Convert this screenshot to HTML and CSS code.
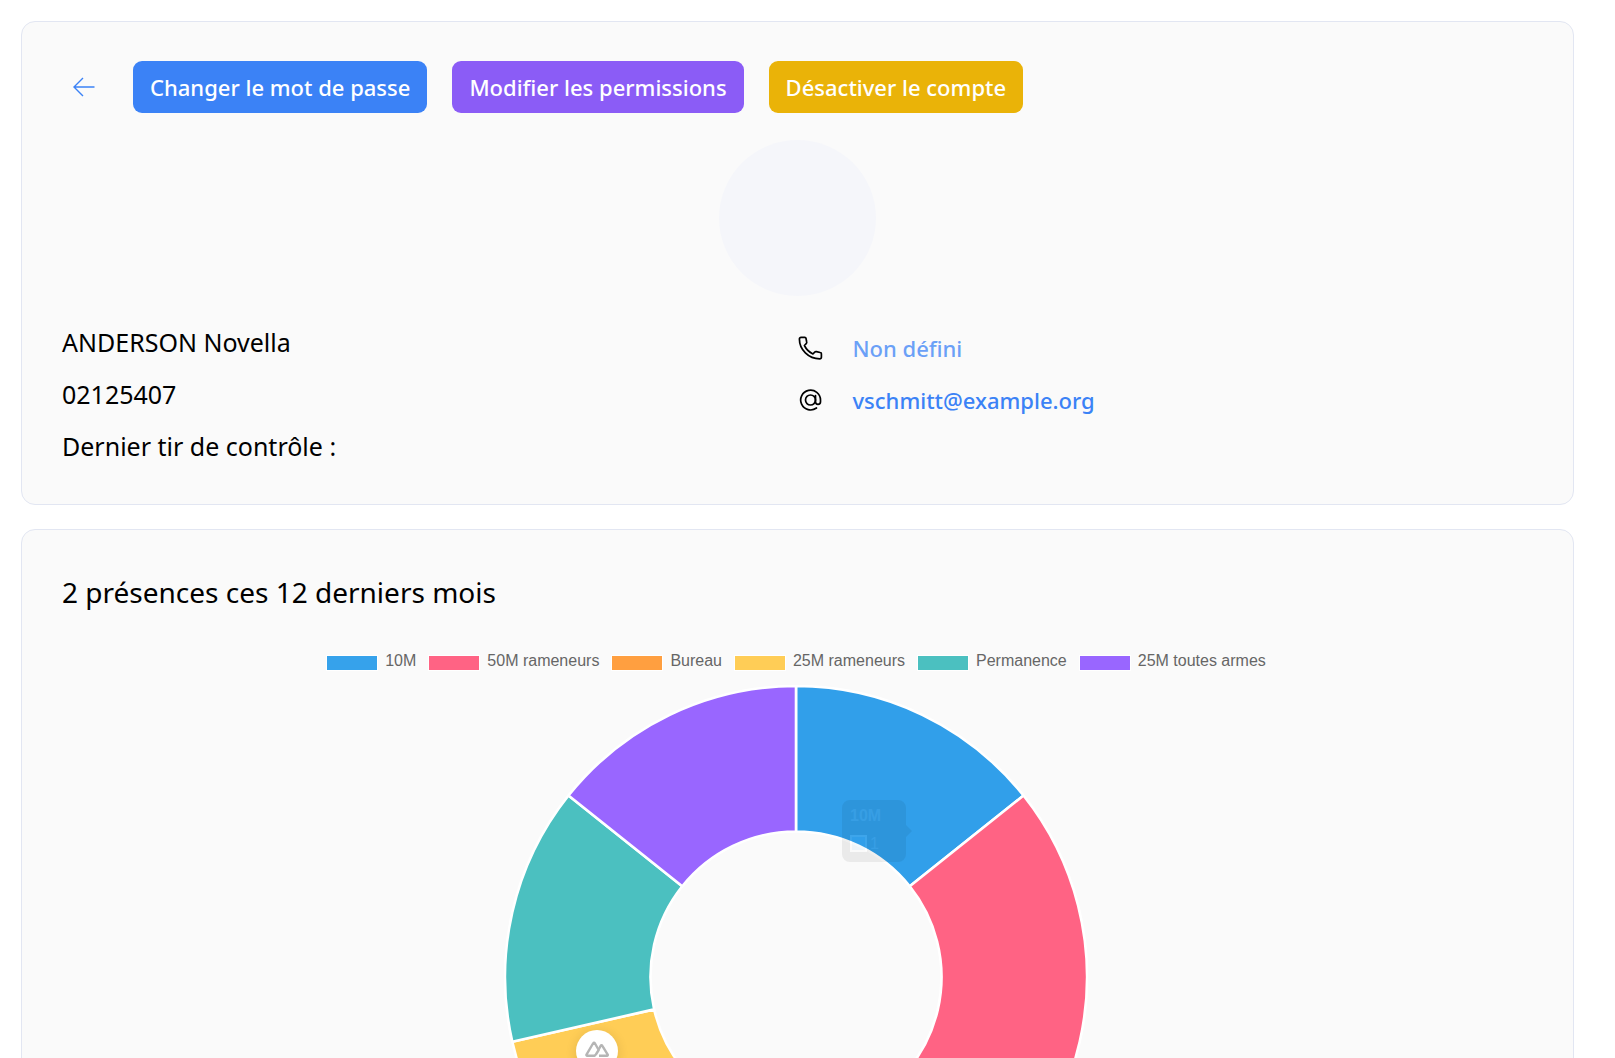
FILE: index.html
```html
<!DOCTYPE html>
<html lang="fr">
<head>
<meta charset="utf-8">
<meta name="viewport" content="width=device-width, initial-scale=1">
<title>ANDERSON Novella</title>
<link rel="stylesheet" href="styles.css">
</head>
<body>
<main class="page">
  <section class="card profile">
    <div class="actions">
      <a class="back" href="#" aria-label="Retour">
        <svg class="icon" viewBox="0 0 26 26" fill="none" stroke="currentColor" stroke-width="1.4"><path d="M23.500 13H3M12 4L3 13l9 9"/></svg>
      </a>
      <button class="btn btn-blue" type="button">Changer le mot de passe</button>
      <button class="btn btn-violet" type="button">Modifier les permissions</button>
      <button class="btn btn-yellow" type="button">Désactiver le compte</button>
    </div>
    <div class="avatar"></div>
    <div class="details">
      <div class="identity">
        <p>ANDERSON Novella</p>
        <p>02125407</p>
        <p>Dernier tir de contrôle :</p>
      </div>
      <div class="contact">
        <div class="contact-row">
          <svg class="icon" viewBox="0 0 26 26" fill="none" stroke="currentColor" stroke-width="1.700" stroke-linejoin="round"><path d="M3 2.300h3.700a1.300 1.300 0 0 1 1.300 1l.7 3.700a1.800 1.800 0 0 1-.5 1.700L6.400 10.500a19 19 0 0 0 8.500 8.500l1.800-1.800a1.800 1.800 0 0 1 1.700-.5l3.800.8a1.300 1.300 0 0 1 1.200 1.300v3.400a1.600 1.600 0 0 1-1.600 1.600C10.500 23.800 1.400 14.500 1.400 3.900a1.600 1.600 0 0 1 1.600-1.600z"/></svg>
          <a class="link muted" href="#">Non défini</a>
        </div>
        <div class="contact-row">
          <svg class="icon" viewBox="0 0 26 26" fill="none" stroke="currentColor" stroke-width="1.700" stroke-linecap="round"><circle cx="12.500" cy="13" r="5"/><path d="M17.500 8.500V14.800a2.500 2.500 0 0 0 5 0V13A9.900 9.900 0 1 0 18.500 21"/></svg>
          <a class="link" href="mailto:vschmitt@example.org">vschmitt@example.org</a>
        </div>
      </div>
    </div>
  </section>

  <section class="card stats">
    <h2 class="title">2 présences ces 12 derniers mois</h2>
    <div class="graph">
      <ul class="legend">
        <li><span class="swatch c-blue"></span>10M</li>
        <li><span class="swatch c-red"></span>50M rameneurs</li>
        <li><span class="swatch c-orange"></span>Bureau</li>
        <li><span class="swatch c-yellow"></span>25M rameneurs</li>
        <li><span class="swatch c-teal"></span>Permanence</li>
        <li><span class="swatch c-purple"></span>25M toutes armes</li>
      </ul>
      <svg class="chart" viewBox="-292 -292 584 584" role="img" aria-label="Répartition des présences">
        <g stroke="#fff" stroke-width="2.600" stroke-linejoin="bevel">
          <path fill="#319fea" d="M0-291A291 291 0 0 1 227.510-181.440L113.760-90.720A145.500 145.500 0 0 0 0-145.500Z"/>
          <path fill="#ff6384" d="M227.510-181.440A291 291 0 0 1 126.260 262.180L63.130 131.090A145.500 145.500 0 0 0 113.760-90.720Z"/>
          <path fill="#ff9f40" d="M126.260 262.180A291 291 0 0 1-126.260 262.180L-63.130 131.090A145.500 145.500 0 0 0 63.130 131.090Z"/>
          <path fill="#ffcd56" d="M-126.260 262.180A291 291 0 0 1-283.700 64.750L-141.850 32.380A145.500 145.500 0 0 0-63.130 131.090Z"/>
          <path fill="#4bc0c0" d="M-283.700 64.750A291 291 0 0 1-227.510-181.440L-113.760-90.720A145.500 145.500 0 0 0-141.850 32.380Z"/>
          <path fill="#9966ff" d="M-227.510-181.440A291 291 0 0 1 0-291V-145.500A145.500 145.500 0 0 0-113.760-90.720Z"/>
        </g>
        <g opacity=".06">
          <path d="M54-177h48a8 8 0 0 1 8 8v17l6 6-6 6v17a8 8 0 0 1-8 8H54a8 8 0 0 1-8-8v-46a8 8 0 0 1 8-8z"/>
          <text class="tip-title" x="54" y="-156" fill="#999">10M</text>
          <path d="M55-141h15v15H55z" fill="#36a2eb" stroke="#fff" stroke-width="2"/>
          <text x="74" y="-128" fill="#999">1</text>
        </g>
      </svg>
    </div>
  </section>
</main>
<button class="devtools" type="button" aria-label="Nuxt DevTools">
  <svg viewBox="0 0 24 16" fill="none" stroke="#b5b5b5" stroke-width="2.400" stroke-linejoin="round"><path d="M10.500 14.800H2.200a.8.800 0 0 1-.7-1.200L8.300 2a.8.800 0 0 1 1.400 0l4 7-2.500 4c-.6 1.200-1.200 1.800-2.200 1.800"/><path d="M14 14.800h8a.8.800 0 0 0 .7-1.200L17.200 4.700a.8.800 0 0 0-1.400 0L13.700 8.500"/></svg>
</button>
</body>
</html>
```
FILE: styles.css
```css
* { box-sizing: border-box; }

body {
  margin: 0;
  background: #fff;
  color: #000;
  font-family: "Noto Sans", sans-serif;
  font-size: 25px;
}

p, h2, ul { margin: 0; padding: 0; }

.page {
  display: flex;
  flex-direction: column;
  gap: 24px;
  padding: 21px 41px 21px 21px;
}

.card {
  padding: 39px 40px 32px;
  border: 1px solid #e2e6f2;
  border-radius: 14px;
  background: #fafafa;
}

.actions {
  display: flex;
  align-items: center;
  gap: 25px;
}

.back {
  display: flex;
  padding: 0 11px 0 9px;
  color: #3b82f6;
}

.icon { width: 26px; height: 26px; flex: none; }

.btn {
  height: 52px;
  padding: 0 17px;
  border: 0;
  border-radius: 9px;
  color: #fff;
  font: 500 22px/32px "Noto Sans", sans-serif;
  cursor: pointer;
}
.btn-blue { background: #3b82f6; }
.btn-violet { background: #8b5cf6; }
.btn-yellow { background: #eab308; }

.avatar {
  width: 157px;
  height: 156px;
  margin: 27px auto 20px;
  border-radius: 50%;
  background: #f5f6fa;
}

.details {
  display: grid;
  grid-template-columns: 1fr 1fr;
  line-height: 52px;
}

.contact { padding-top: 6px; }

.contact-row {
  display: flex;
  align-items: center;
  gap: 29px;
  height: 52px;
}

.link {
  color: #3b82f6;
  font-size: 22px;
  font-weight: 500;
  text-decoration: none;
}
.muted { opacity: .75; }

.title {
  font-size: 28px;
  font-weight: 400;
  line-height: 46px;
}

.graph {
  margin-top: 36px;
  padding-right: 3px;
}

.legend {
  display: flex;
  justify-content: center;
  gap: 12px;
  list-style: none;
  color: #666;
  font: 16px/20px "Liberation Sans", Arial, sans-serif;
}
.legend li { display: flex; gap: 7px; }
.swatch {
  width: 52px;
  height: 16px;
  margin-top: 4px;
  border: 1px solid #fff;
}
.c-blue { background: #36a2eb; }
.c-red { background: #ff6384; }
.c-orange { background: #ff9f40; }
.c-yellow { background: #ffcd56; }
.c-teal { background: #4bc0c0; }
.c-purple { background: #9966ff; }

.chart {
  display: block;
  width: 40%;
  min-width: 300px;
  max-width: 584px;
  margin: 14px auto 0;
  font: 16px "Liberation Sans", Arial, sans-serif;
}
.tip-title { font-weight: 700; }

.devtools {
  position: fixed;
  left: 576px;
  bottom: -14px;
  display: flex;
  align-items: center;
  justify-content: center;
  width: 42px;
  height: 42px;
  padding: 0 0 4px;
  border: 0;
  border-radius: 50%;
  background: #fff;
  box-shadow: 0 2px 12px rgba(0, 0, 0, .12);
}
.devtools svg { width: 24px; height: 16px; }
```
